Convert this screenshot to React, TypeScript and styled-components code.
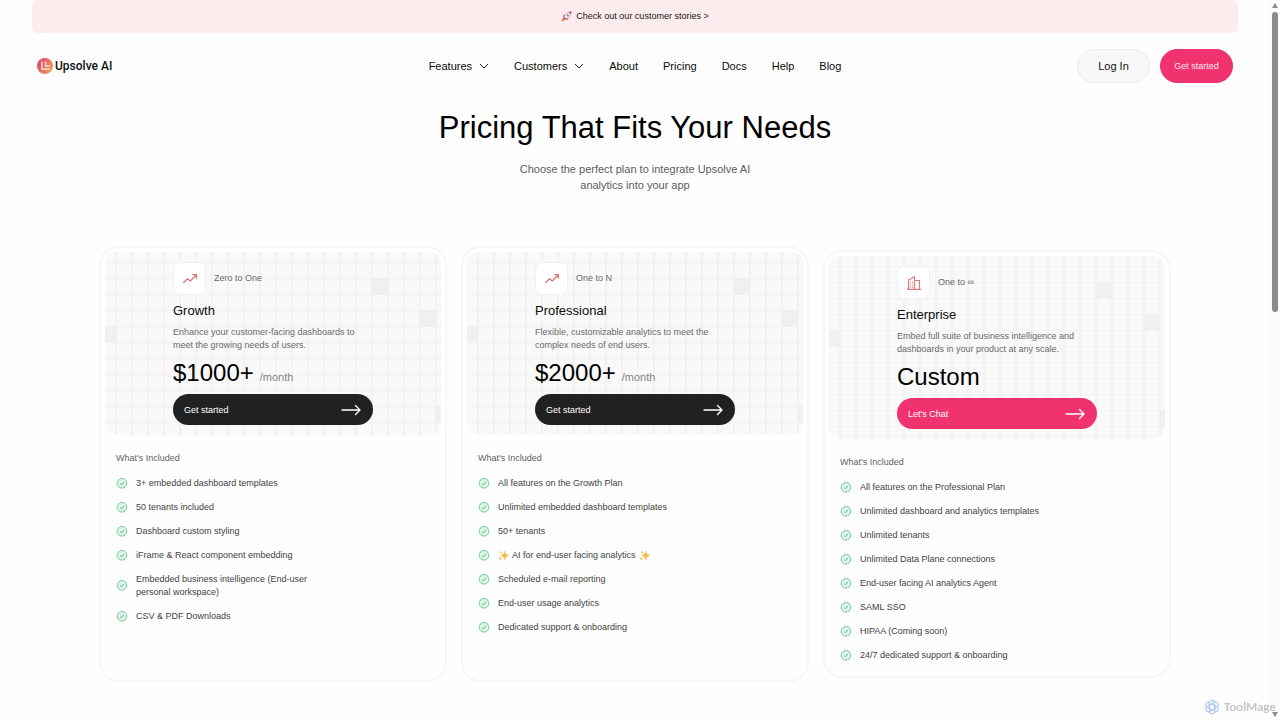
import React from 'react';
import styled, { createGlobalStyle } from 'styled-components';

const GlobalStyle = createGlobalStyle`
  *, *::before, *::after { box-sizing: border-box; }
  html { scrollbar-width: none; }
  body {
    margin: 0;
    background: #fefefe;
    color: #0b0b0b;
    font-family: "Liberation Sans", Arial, sans-serif;
    font-size: 9px;
    line-height: 13px;
  }
  h1, h2, h3, p, ul { margin: 0; padding: 0; font-weight: 400; }
  ul { list-style: none; }
  a { color: inherit; text-decoration: none; }
  button { font-family: inherit; cursor: pointer; }
  svg { display: block; flex: none; }
`;

const Page = styled.div`
  padding-right: 10px;
`;

const Banner = styled.a`
  display: flex;
  align-items: center;
  justify-content: center;
  gap: 4px;
  height: 33px;
  margin: 0 32px;
  border-radius: 6px;
  background: #fdeced;
  color: #161616;
`;

const Header = styled.header`
  display: grid;
  grid-template-columns: 1fr auto 1fr;
  align-items: center;
  padding: 16px 37px;
`;

const Logo = styled.a`
  display: flex;
  align-items: center;
  gap: 2px;
  font: 500 12px/16px Roboto, "Liberation Sans", sans-serif;
  color: #111;
`;

const Nav = styled.nav`
  display: flex;
  align-items: center;
  gap: 25px;
`;

const NavLink = styled.a`
  font-size: 11px;
  line-height: 16px;
`;

const NavMenu = styled.button`
  display: flex;
  align-items: center;
  gap: 7px;
  padding: 0;
  border: 0;
  background: none;
  color: inherit;
  font-size: 11px;
  line-height: 16px;
`;

const Actions = styled.div`
  display: flex;
  justify-content: flex-end;
  gap: 10px;
`;

const PillButton = styled.button<{ $primary?: boolean }>`
  width: 73px;
  height: 34px;
  padding: 0;
  border: 1px solid ${p => (p.$primary ? '#f0326f' : '#ececec')};
  border-radius: 17px;
  background: ${p => (p.$primary ? '#f0326f' : '#f8f8f8')};
  color: ${p => (p.$primary ? '#ffe9f0' : '#111')};
  font-size: ${p => (p.$primary ? 9 : 11)}px;
`;

const Intro = styled.section`
  display: flex;
  flex-direction: column;
  align-items: center;
  gap: 15px;
  padding: 11px 16px 53px;
  text-align: center;
`;

const Title = styled.h1`
  font-size: 31px;
  line-height: 36px;
  color: #000;
`;

const Subtitle = styled.p`
  max-width: 240px;
  font-size: 11px;
  line-height: 16px;
  color: #5c5c5c;
`;

const Plans = styled.main`
  display: grid;
  grid-template-columns: repeat(3, 1fr);
  align-items: center;
  gap: 14px;
  max-width: 1104px;
  margin: 0 auto;
  padding: 0 16px 40px;
`;

const Card = styled.article<{ $tall?: boolean }>`
  min-height: ${p => (p.$tall ? 436 : 428)}px;
  padding: 4px 4px 14px;
  border: 2px solid #f7f7f7;
  border-radius: 20px;
`;

const Hero = styled.div`
  position: relative;
  display: flex;
  justify-content: center;
  padding: 10px;
  overflow: hidden;
  border-radius: 12px;
  background: #f9f9f9;
`;

const Backdrop = styled.svg`
  position: absolute;
  inset: 0;
  width: 100%;
  height: 100%;
`;

const HeroBody = styled.div`
  position: relative;
  width: 200px;
`;

const Stage = styled.div`
  display: flex;
  align-items: center;
  gap: 8px;
  color: #686868;
`;

const IconTile = styled.span`
  display: grid;
  place-items: center;
  width: 33px;
  height: 33px;
  border: 1px solid #f1f1f1;
  border-radius: 7px;
  background: #fff;
`;

const PlanName = styled.h2`
  margin-top: 6px;
  font-size: 13px;
  line-height: 20px;
`;

const Description = styled.p`
  margin-top: 5px;
  color: #6a6a6a;
`;

const Price = styled.p`
  display: flex;
  align-items: baseline;
  gap: 6px;
  margin-top: 7px;
  font-size: 24px;
  line-height: 28px;
  color: #000;
`;

const Period = styled.span`
  font-size: 11px;
  line-height: 13px;
  color: #858585;
`;

const PlanButton = styled.button<{ $accent?: boolean }>`
  display: flex;
  align-items: center;
  justify-content: space-between;
  width: 100%;
  height: 31px;
  margin-top: 7px;
  padding: 0 12px 0 11px;
  border: 0;
  border-radius: 16px;
  background: ${p => (p.$accent ? '#f0326f' : '#212121')};
  color: #fff;
  font-size: 9px;
`;

const Included = styled.section`
  padding: 17px 11px 0;
`;

const IncludedTitle = styled.h3`
  font-size: 9px;
  line-height: 13px;
  color: #5f5f5f;
`;

const FeatureList = styled.ul`
  display: grid;
  gap: 11px;
  margin-top: 12px;
`;

const Feature = styled.li`
  display: flex;
  align-items: center;
  gap: 8px;
  color: #424242;
`;

const FeatureText = styled.span`
  display: flex;
  align-items: center;
  gap: 3px;
  max-width: 200px;
`;

const Watermark = styled.div`
  position: fixed;
  right: 4px;
  bottom: 5px;
  display: flex;
  align-items: center;
  gap: 4px;
  color: #c4c4c4;
  font: 700 12px/16px Lato, sans-serif;
`;

const ScrollTrack = styled.div`
  position: fixed;
  top: 0;
  right: 0;
  bottom: 0;
  display: flex;
  flex-direction: column;
  align-items: center;
  width: 10px;
  padding: 3px 0;
  background: #fbfbfb;
`;

const ScrollThumb = styled.div`
  flex: 0 0 42%;
  width: 6px;
  margin: 4px 0 auto;
  border-radius: 3px;
  background: #8b8b8b;
`;

const LogoMark = () => (
  <svg width="16" height="16" viewBox="0 0 16 16" aria-hidden="true">
    <defs>
      <linearGradient id="logo" x1="0" y1="0.2" x2="1" y2="0.8">
        <stop offset="0" stopColor="#dc3c73" />
        <stop offset="1" stopColor="#f3a552" />
      </linearGradient>
    </defs>
    <circle cx="8" cy="8" r="8" fill="url(#logo)" />
    <path d="M4.900 3.600v7.500h7.800M8.600 3.600v4.500h4.100" fill="none" stroke="#fbd3c3" strokeWidth="1.600" />
  </svg>
);

const Rocket = () => (
  <svg width="11" height="11" viewBox="0 0 20 20" aria-hidden="true">
    <path d="M3 9.5 7.5 6l4 1-4 5zM10.5 17 14 12.500l-1-4-5 4z" fill="#cf2548" />
    <path d="M5.500 11C7 5 12 1.500 18.500 1.500 18.500 8 15 13 9 14.500z" fill="#eee3ea" stroke="#b795ae" strokeWidth="1" />
    <path d="M14 1.900c1.500-.4 3-.4 4.500-.4 0 1.500 0 3-.4 4.500z" fill="#cf2548" />
    <circle cx="12.300" cy="7.700" r="1.800" fill="#7789a8" />
    <path d="M5.500 11 9 14.500l-2 1.500-3-3z" fill="#ad2445" />
    <path d="M4 13c-2 1-2.500 3-2.800 5.800C4 18.500 6 18 7 16z" fill="#ee7b54" />
  </svg>
);

const Sparkles = () => (
  <svg width="11" height="11" viewBox="0 0 22 22" fill="#f2bd4b" aria-hidden="true">
    <path d="M13.500 2c1 5 2.800 7.500 8 9-5.200 1.500-7 4-8 9-1-5-2.800-7.500-8-9 5.200-1.500 7-4 8-9z" stroke="#f2bd4b" strokeWidth="1" />
    <path d="M6 1c.4 2.200 1.200 3 3 3.500-1.800.5-2.600 1.300-3 3.500-.4-2.200-1.200-3-3-3.500C4.800 4 5.600 3.200 6 1zM4.500 13c.5 2.400 1.400 3.400 3.500 4-2.100.6-3 1.600-3.500 4-.5-2.400-1.400-3.400-3.500-4 2.100-.6 3-1.600 3.500-4z" />
  </svg>
);

const Chevron = () => (
  <svg width="10" height="6" viewBox="0 0 10 6" fill="none" stroke="#222" strokeWidth="1" aria-hidden="true">
    <path d="M1 1l4 4 4-4" />
  </svg>
);

const Arrow = () => (
  <svg width="20" height="12" viewBox="0 0 20 12" fill="none" stroke="#fff" strokeWidth="1.4" strokeLinecap="round" strokeLinejoin="round" aria-hidden="true">
    <path d="M1 6h18M14.500 1.500 19 6l-4.500 4.500" />
  </svg>
);

const Trend = () => (
  <svg width="16" height="16" viewBox="0 0 16 16" fill="none" stroke="#cf7d76" strokeWidth="1.3" strokeLinejoin="round" aria-hidden="true">
    <path d="M1.300 12 5.500 7.800 8.200 10 14 4.200M10.300 3.700h4.200v4" />
  </svg>
);

const Building = () => (
  <svg width="16" height="16" viewBox="0 0 16 16" fill="none" stroke="#dd7c78" strokeWidth="1.200" aria-hidden="true">
    <path d="M1 14.300h14M2.500 14V5l6-3.300V14M8.500 5.500h5V14" />
    <path d="M4.200 7.300h.9M6.100 7.300H7M4.200 9.800h.9M6.100 9.800H7M4.200 12.200h.9M6.100 12.200H7" />
  </svg>
);

const Check = () => (
  <svg width="12" height="12" viewBox="0 0 12 12" fill="none" aria-hidden="true">
    <circle cx="6" cy="5.300" r="4.800" fill="#d9f7e6" stroke="#7fc3a0" strokeWidth="1" />
    <path d="M4 5.500l1.400 1.300 2.600-2.800" stroke="#6bb590" strokeWidth="1" />
  </svg>
);

const Knot = () => (
  <svg width="16" height="16" viewBox="0 0 16 16" fill="none" stroke="#b4cbf0" strokeWidth="1.300" aria-hidden="true">
    {[0, 60, 120, 180, 240, 300].map(angle => (
      <path key={angle} transform={`rotate(${angle} 8 8)`} d="M5.200 9.500V4.200C5.200 2 7.500.6 9.500 1.600c.6.300 1.100.8 1.400 1.500M5.200 6.400 8 4.800l2.800 1.600" />
    ))}
  </svg>
);

const HeroGrid = ({ id }: { id: string }) => (
  <Backdrop viewBox="0 0 336 183" preserveAspectRatio="xMidYMid slice" aria-hidden="true">
    <defs>
      <pattern id={id} x="10" y="10" width="16" height="16" patternUnits="userSpaceOnUse">
        <path d="M0 0h16v1H0zM0 0h2v16H0z" fill="#f2f2f2" />
      </pattern>
    </defs>
    <rect width="336" height="183" fill={`url(#${id})`} />
    <g fill="#f0f0f0">
      <rect x="267" y="26" width="16" height="17" />
      <rect x="315" y="58" width="16" height="17" />
      <rect x="0" y="74" width="11" height="17" />
      <rect x="331" y="154" width="5" height="17" />
    </g>
  </Backdrop>
);

interface Plan {
  name: string;
  stage: string;
  description: string;
  price: string;
  period?: string;
  action: string;
  features: string[];
  enterprise?: boolean;
}

const plans: Plan[] = [
  {
    name: 'Growth',
    stage: 'Zero to One',
    description: 'Enhance your customer-facing dashboards to meet the growing needs of users.',
    price: '$1000+',
    period: '/month',
    action: 'Get started',
    features: [
      '3+ embedded dashboard templates',
      '50 tenants included',
      'Dashboard custom styling',
      'iFrame & React component embedding',
      'Embedded business intelligence (End-user personal workspace)',
      'CSV & PDF Downloads',
    ],
  },
  {
    name: 'Professional',
    stage: 'One to N',
    description: 'Flexible, customizable analytics to meet the complex needs of end users.',
    price: '$2000+',
    period: '/month',
    action: 'Get started',
    features: [
      'All features on the Growth Plan',
      'Unlimited embedded dashboard templates',
      '50+ tenants',
      '* AI for end-user facing analytics',
      'Scheduled e-mail reporting',
      'End-user usage analytics',
      'Dedicated support & onboarding',
    ],
  },
  {
    name: 'Enterprise',
    stage: 'One to ∞',
    description: 'Embed full suite of business intelligence and dashboards in your product at any scale.',
    price: 'Custom',
    action: "Let's Chat",
    enterprise: true,
    features: [
      'All features on the Professional Plan',
      'Unlimited dashboard and analytics templates',
      'Unlimited tenants',
      'Unlimited Data Plane connections',
      'End-user facing AI analytics Agent',
      'SAML SSO',
      'HIPAA (Coming soon)',
      '24/7 dedicated support & onboarding',
    ],
  },
];

// A leading "* " marks a feature that is wrapped in sparkles.
const FeatureRow = ({ text }: { text: string }) => {
  const highlighted = text.startsWith('* ');
  return (
    <Feature>
      <Check />
      <FeatureText>
        {highlighted && <Sparkles />}
        {highlighted ? text.slice(2) : text}
        {highlighted && <Sparkles />}
      </FeatureText>
    </Feature>
  );
};

const PlanCard = ({ plan }: { plan: Plan }) => (
  <Card $tall={!plan.enterprise}>
    <Hero>
      <HeroGrid id={`grid-${plan.name}`} />
      <HeroBody>
        <Stage>
          <IconTile>{plan.enterprise ? <Building /> : <Trend />}</IconTile>
          {plan.stage}
        </Stage>
        <PlanName>{plan.name}</PlanName>
        <Description>{plan.description}</Description>
        <Price>
          {plan.price}
          {plan.period && <Period>{plan.period}</Period>}
        </Price>
        <PlanButton $accent={plan.enterprise}>
          {plan.action}
          <Arrow />
        </PlanButton>
      </HeroBody>
    </Hero>
    <Included>
      <IncludedTitle>What's Included</IncludedTitle>
      <FeatureList>
        {plan.features.map(text => <FeatureRow key={text} text={text} />)}
      </FeatureList>
    </Included>
  </Card>
);

export default function App() {
  return (
    <>
      <GlobalStyle />
      <Page>
        <Banner href="#stories">
          <Rocket />
          Check out our customer stories &gt;
        </Banner>
        <Header>
          <Logo href="#home"><LogoMark />Upsolve AI</Logo>
          <Nav>
            <NavMenu>Features<Chevron /></NavMenu>
            <NavMenu>Customers<Chevron /></NavMenu>
            <NavLink href="#about">About</NavLink>
            <NavLink href="#pricing">Pricing</NavLink>
            <NavLink href="#docs">Docs</NavLink>
            <NavLink href="#help">Help</NavLink>
            <NavLink href="#blog">Blog</NavLink>
          </Nav>
          <Actions>
            <PillButton>Log In</PillButton>
            <PillButton $primary>Get started</PillButton>
          </Actions>
        </Header>
        <Intro>
          <Title>Pricing That Fits Your Needs</Title>
          <Subtitle>Choose the perfect plan to integrate Upsolve AI analytics into your app</Subtitle>
        </Intro>
        <Plans>
          {plans.map(plan => <PlanCard key={plan.name} plan={plan} />)}
        </Plans>
      </Page>
      <ScrollTrack aria-hidden="true">
        <svg width="6" height="5" viewBox="0 0 6 5" fill="#8b8b8b"><path d="M3 0l3 5H0z" /></svg>
        <ScrollThumb />
        <svg width="6" height="5" viewBox="0 0 6 5" fill="#8b8b8b"><path d="M0 0h6L3 5z" /></svg>
      </ScrollTrack>
      <Watermark><Knot />ToolMage</Watermark>
    </>
  );
}
